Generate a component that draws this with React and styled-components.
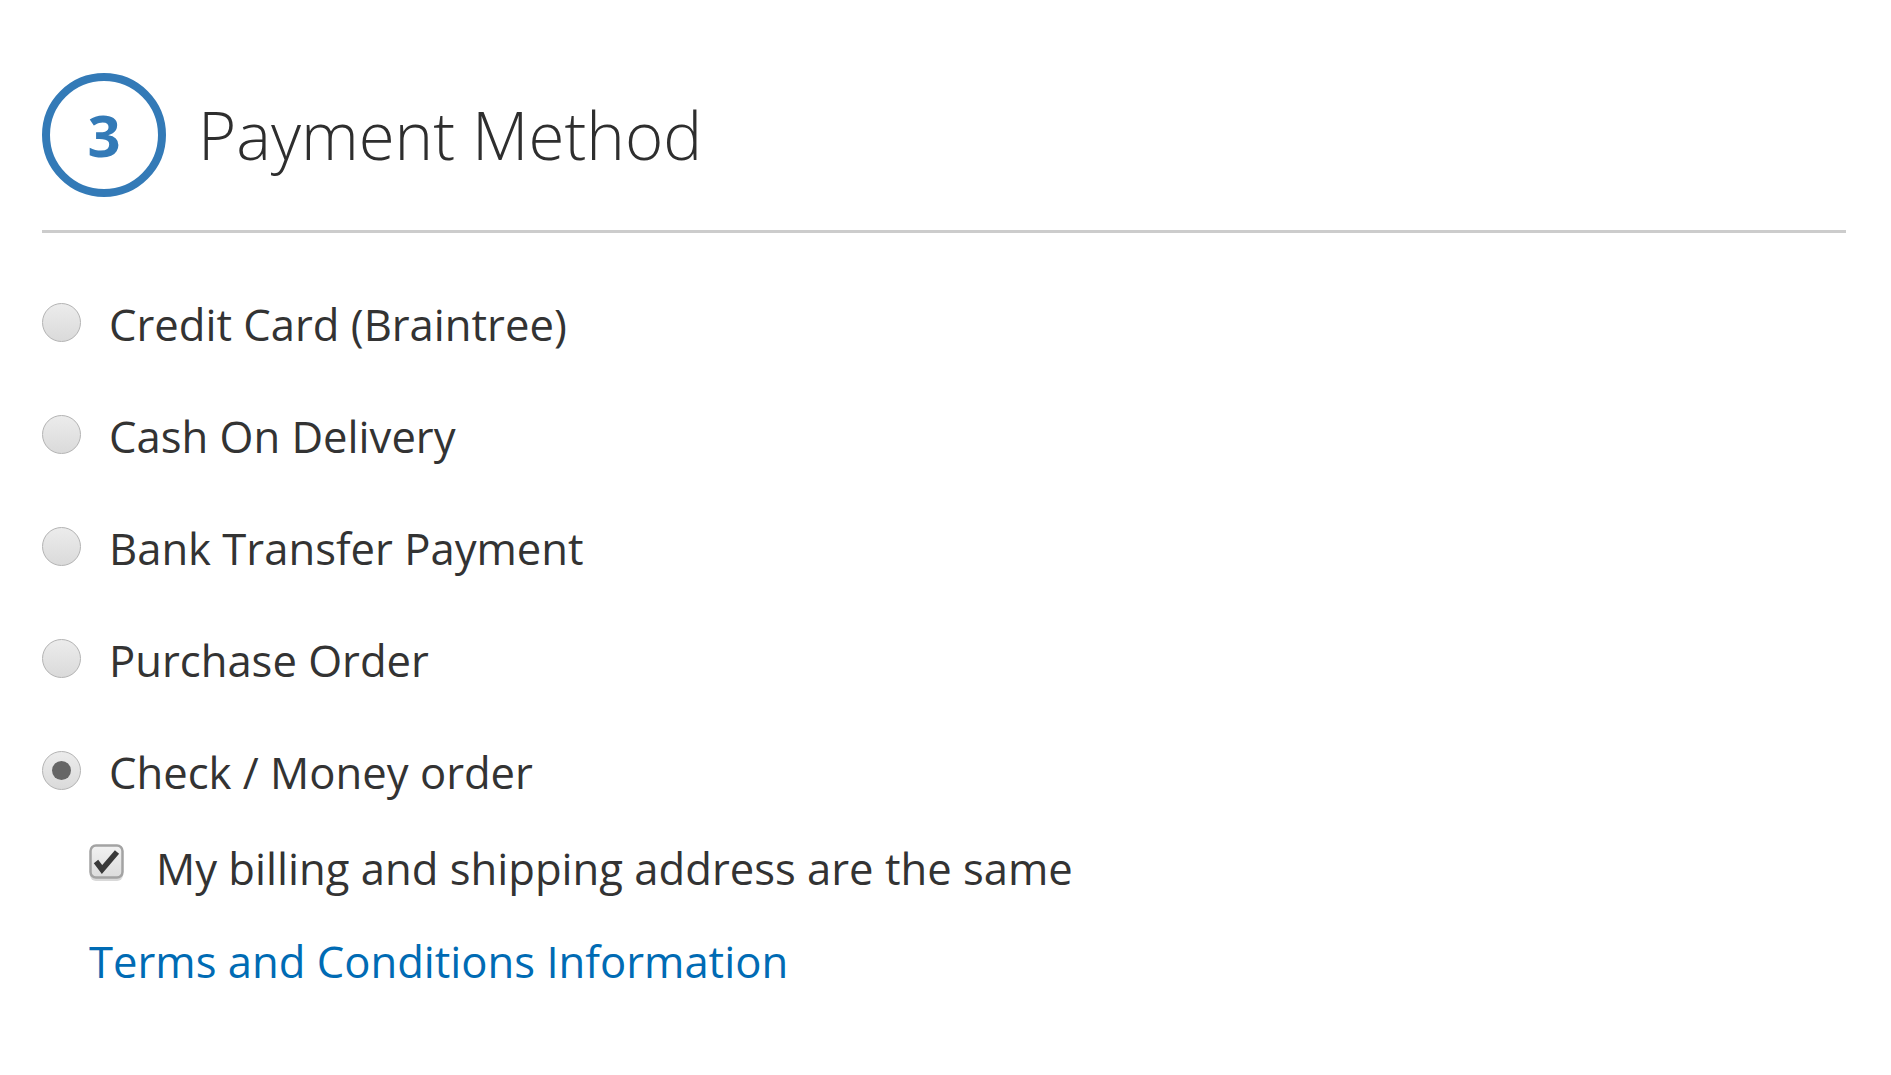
import React from "react";
import styled, { createGlobalStyle } from "styled-components";

const Global = createGlobalStyle`
  html, body { margin: 0; padding: 0; background: #fff; }
  body { font-family: "Open Sans", "Liberation Sans", sans-serif; color: #333; }
`;

const Page = styled.div`
  padding: 73px 45px 0 42px;
`;

const Header = styled.div`
  display: flex;
  align-items: center;
  gap: 32px;
  padding-bottom: 33px;
  border-bottom: 3px solid #cccccc;
`;

const StepCircle = styled.div`
  box-sizing: border-box;
  width: 124px;
  height: 124px;
  border-radius: 50%;
  border: 8px solid #337ab7;
  color: #337ab7;
  display: flex;
  align-items: center;
  justify-content: center;
  font-weight: 700;
  font-size: 58px;
  line-height: 1;
  flex-shrink: 0;
`;

const Title = styled.h2`
  margin: 0;
  font-weight: 300;
  font-size: 65.4px;
  line-height: 1;
  color: #2e2e2e;
`;

const Methods = styled.div`
  display: flex;
  flex-direction: column;
  padding-top: 33px;
`;

const Row = styled.label`
  display: flex;
  align-items: center;
  height: 112px;
  gap: 28px;
  cursor: pointer;
`;

const Radio = styled.span`
  box-sizing: border-box;
  width: 39px;
  height: 39px;
  border-radius: 50%;
  border: 1px solid #b3b3b3;
  background: linear-gradient(#ececec, #dadada);
  display: flex;
  align-items: center;
  justify-content: center;
  flex-shrink: 0;
  &::after {
    content: "";
    display: ${(p) => (p.$checked ? "block" : "none")};
    width: 19px;
    height: 19px;
    border-radius: 50%;
    background: #666;
  }
`;

const Label = styled.span`
  font-size: 43.6px;
  line-height: 1.36;
  margin-top: 6px;
  color: #333;
`;

const Details = styled.div`
  display: flex;
  flex-direction: column;
  padding-left: 47px;
  margin-top: 8px;
`;

const CheckRow = styled.label`
  display: flex;
  align-items: center;
  gap: 32px;
  height: 64px;
`;

const CheckBox = styled.span`
  display: flex;
  flex-shrink: 0;
  margin-top: -6px;
`;

const Link = styled.a`
  font-size: 43.6px;
  line-height: 1.36;
  color: #006bb4;
  text-decoration: none;
  margin-top: 34px;
`;

const methods = [
  "Credit Card (Braintree)",
  "Cash On Delivery",
  "Bank Transfer Payment",
  "Purchase Order",
  "Check / Money order",
];

export default function App() {
  return (
    <>
      <Global />
      <Page>
        <Header>
          <StepCircle>3</StepCircle>
          <Title>Payment Method</Title>
        </Header>
        <Methods>
          {methods.map((m, i) => (
            <Row key={m}>
              <Radio $checked={i === methods.length - 1} />
              <Label>{m}</Label>
            </Row>
          ))}
        </Methods>
        <Details>
          <CheckRow>
            <CheckBox>
              <svg width="35" height="38" viewBox="0 0 35 38">
                <defs>
                  <linearGradient id="cbg" x1="0" y1="0" x2="0" y2="1">
                    <stop offset="0" stopColor="#f2f2f2" />
                    <stop offset="1" stopColor="#dcdcdc" />
                  </linearGradient>
                </defs>
                <rect x="1" y="3" width="33" height="34" rx="6" fill="#d9d9d9" />
                <rect x="1.5" y="1.5" width="32" height="32" rx="5.5" fill="url(#cbg)" stroke="#a3a3a3" strokeWidth="2.5" />
                <polyline points="7,17.5 13,25.5 28,8" fill="none" stroke="#3a3a3a" strokeWidth="5.5" strokeLinejoin="miter" />
              </svg>
            </CheckBox>
            <Label>My billing and shipping address are the same</Label>
          </CheckRow>
          <Link href="#">Terms and Conditions Information</Link>
        </Details>
      </Page>
    </>
  );
}
